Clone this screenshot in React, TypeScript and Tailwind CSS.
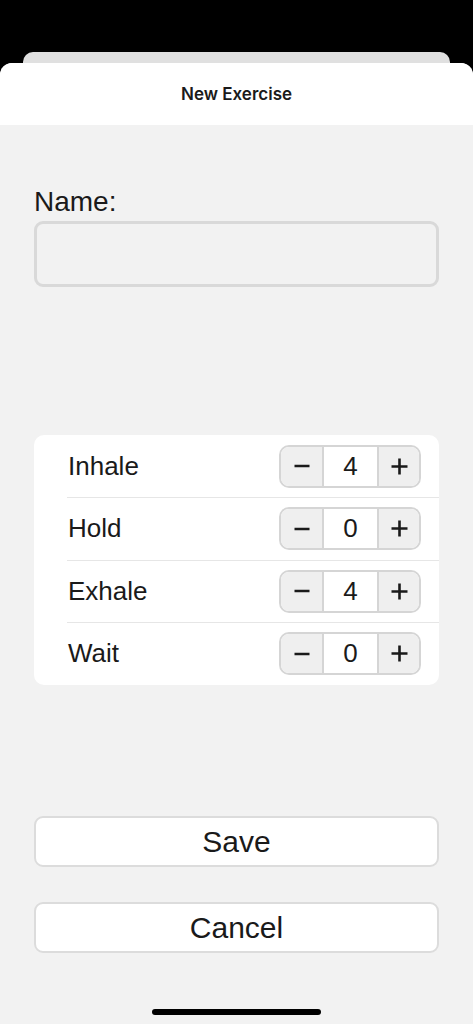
import React from "react";

const font = { fontFamily: '"Liberation Sans", Arial, sans-serif' };

type Row = { label: string; value: number };

const rows: Row[] = [
  { label: "Inhale", value: 4 },
  { label: "Hold", value: 0 },
  { label: "Exhale", value: 4 },
  { label: "Wait", value: 0 },
];

function Minus() {
  return (
    <svg width="16" height="16" viewBox="0 0 16 16">
      <path d="M0.5 8h15" stroke="#1a1a1a" strokeWidth="2.6" strokeLinecap="butt" />
    </svg>
  );
}

function Plus() {
  return (
    <svg width="17" height="17" viewBox="0 0 17 17">
      <path d="M0.5 8.5h16M8.5 0.5v16" stroke="#1a1a1a" strokeWidth="2.6" />
    </svg>
  );
}

function Stepper({ value }: { value: number }) {
  return (
    <div className="flex h-[43px] w-[142px] overflow-hidden rounded-[10px] border-2 border-[#d5d5d5]">
      <button className="flex w-[41px] items-center justify-center bg-[#efefef]">
        <Minus />
      </button>
      <div className="flex w-[57px] items-center justify-center border-x-2 border-[#d5d5d5] bg-white text-[26px] text-[#1a1a1a]">
        {value}
      </div>
      <button className="flex flex-1 items-center justify-center bg-[#efefef]">
        <Plus />
      </button>
    </div>
  );
}

export default function App() {
  return (
    <div className="flex h-[1024px] w-[473px] flex-col overflow-hidden bg-black" style={font}>
      <div className="h-[52px] shrink-0" />
      {/* card behind the sheet */}
      <div className="mx-[23px] h-[11px] shrink-0 rounded-t-[10px] bg-[#e0e0e0]" />

      <div className="flex flex-1 flex-col overflow-hidden rounded-t-[12px] bg-[#f2f2f2]">
        {/* Header */}
        <div className="flex h-[62px] shrink-0 items-center justify-center bg-white pt-[2px]">
          <h1 className="font-['Inter',sans-serif] text-[17px] font-semibold text-[#1a1a1a]">New Exercise</h1>
        </div>

        <div className="flex flex-1 flex-col px-[34px]">
          {/* Name field */}
          <label className="mt-[61px] text-[28px] leading-[32px] text-[#1a1a1a]">Name:</label>
          <div className="mt-[3px] h-[66px] rounded-[9px] border-[3px] border-[#d9d9d9] bg-[#f2f2f2]" />

          {/* Breathing steps */}
          <div className="mt-[148px] rounded-[10px] bg-white">
            {rows.map((row, i) => (
              <div
                key={row.label}
                className={`ml-[33px] flex items-center justify-between pr-[18px] ${
                  i > 0 ? "h-[62.5px] border-t border-[#e6e6e6]" : "h-[62px]"
                }`}
              >
                <span className="pl-[1px] text-[26px] text-[#1a1a1a]">{row.label}</span>
                <Stepper value={row.value} />
              </div>
            ))}
          </div>

          {/* Action buttons */}
          <button className="mt-[131px] h-[51px] rounded-[9px] border-2 border-[#dcdcdc] bg-white text-[30px] text-[#1a1a1a]">
            Save
          </button>
          <button className="mt-[35px] h-[51px] rounded-[9px] border-2 border-[#dcdcdc] bg-white text-[30px] text-[#1a1a1a]">
            Cancel
          </button>

          <div className="mt-auto mb-[9px] flex justify-center">
            <div className="h-[6px] w-[169px] rounded-full bg-black" />
          </div>
        </div>
      </div>
    </div>
  );
}
